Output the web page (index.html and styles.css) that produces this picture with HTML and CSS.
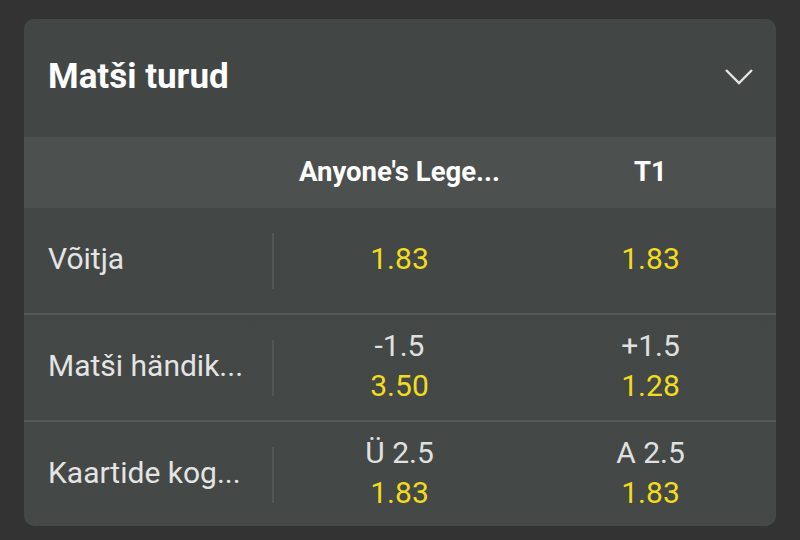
FILE: index.html
```html
<!DOCTYPE html>
<html lang="et">
<head>
<meta charset="utf-8">
<link rel="stylesheet" href="styles.css">
</head>
<body>
<div class="card">
  <div class="head">
    <h1 class="title">Matši turud</h1>
    <svg class="chev" width="30" height="18" viewBox="0 0 30 18"><path d="M2 2 L15 15 L28 2" fill="none" stroke="#e4e4e4" stroke-width="2.4"/></svg>
  </div>
  <div class="cols">
    <div></div>
    <div class="team">Anyone's Lege...</div>
    <div class="team">T1</div>
  </div>
  <div class="row">
    <div class="label"><span>Võitja</span></div>
    <div class="cell"><span class="odd">1.83</span></div>
    <div class="cell"><span class="odd">1.83</span></div>
  </div>
  <div class="row">
    <div class="label"><span>Matši händik...</span></div>
    <div class="cell"><span class="line">-1.5</span><span class="odd">3.50</span></div>
    <div class="cell"><span class="line">+1.5</span><span class="odd">1.28</span></div>
  </div>
  <div class="row">
    <div class="label"><span>Kaartide kog...</span></div>
    <div class="cell"><span class="line">Ü 2.5</span><span class="odd">1.83</span></div>
    <div class="cell"><span class="line">A 2.5</span><span class="odd">1.83</span></div>
  </div>
</div>
</body>
</html>
```
FILE: styles.css
```css
html, body { margin: 0; padding: 0; }
body {
  background: #333333;
  font-family: Roboto, "Noto Sans", sans-serif;
  width: 800px;
  height: 540px;
  overflow: hidden;
}
.card {
  margin: 19px 24px 0 24px;
  background: linear-gradient(180deg, #424645 0%, #444847 100%);
  border-radius: 10px;
  overflow: hidden;
  height: 507px;
}
.head {
  height: 118px;
  display: flex;
  align-items: center;
  justify-content: space-between;
  padding: 0 22px 4px 24px;
  box-sizing: border-box;
}
.title {
  margin: 0;
  font-size: 35px;
  font-weight: 700;
  color: #ffffff;
}
.chev { margin-top: 2px; }
.cols {
  height: 71px;
  background: #4c504f;
  display: grid;
  grid-template-columns: 250px 1fr 1fr;
  align-items: center;
  padding-bottom: 3px;
  box-sizing: border-box;
}
.team {
  text-align: center;
  color: #ffffff;
  font-weight: 700;
  font-size: 27.5px;
}
.row {
  height: 105px;
  display: grid;
  grid-template-columns: 250px 1fr 1fr;
  align-items: center;
  border-bottom: 2px solid #555958;
}
.row:last-child { border-bottom: none; }
.label {
  height: 56px;
  display: flex;
  align-items: center;
  padding-left: 24px;
  border-right: 2px solid #525655;
  color: #e4e4e4;
  font-size: 30px;
  padding-bottom: 4px;
  box-sizing: border-box;
}
.cell {
  display: flex;
  flex-direction: column;
  align-items: center;
  line-height: 40px;
  font-size: 30px;
  padding-bottom: 4px;
}
.line { color: #e0e0e0; }
.odd { color: #f2dc1e; }
```
